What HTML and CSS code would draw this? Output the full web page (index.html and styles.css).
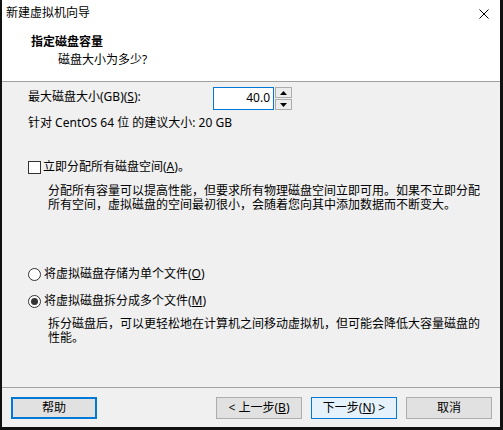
FILE: index.html
```html
<!DOCTYPE html>
<html lang="zh-CN">
<head>
<meta charset="utf-8">
<title>新建虚拟机向导</title>
<link rel="stylesheet" href="styles.css">
</head>
<body>
<div class="window">
  <div class="titlebar">
    <span class="title">新建虚拟机向导</span>
    <svg class="close" width="10" height="10" viewBox="0 0 10 10"><path d="M0.5 0.5 L9.5 9.5 M9.5 0.5 L0.5 9.5" stroke="#000" stroke-width="1" fill="none"/></svg>
  </div>
  <div class="header">
    <div class="h-title">指定磁盘容量</div>
    <div class="h-sub">磁盘大小为多少?</div>
  </div>
  <div class="content">
    <div class="size-row">
      <span class="size-label">最大磁盘大小(GB)(<u>S</u>):</span>
      <div class="spin-input">40.0</div>
      <div class="spin-btns">
        <div class="spin-btn"><svg width="7" height="4" viewBox="0 0 7 4"><polygon points="3.5,0 7,4 0,4" fill="#000"/></svg></div>
        <div class="spin-btn"><svg width="7" height="4" viewBox="0 0 7 4"><polygon points="0,0 7,0 3.5,4" fill="#000"/></svg></div>
      </div>
    </div>
    <div class="recommend">针对 CentOS 64 位 的建议大小: 20 GB</div>
    <div class="check-row">
      <span class="checkbox"></span>
      <span class="check-label">立即分配所有磁盘空间(<u>A</u>)。</span>
    </div>
    <div class="desc desc-alloc">
      <div class="desc-line">分配所有容量可以提高性能，但要求所有物理磁盘空间立即可用。如果不立即分配</div>
      <div class="desc-line">所有空间，虚拟磁盘的空间最初很小，会随着您向其中添加数据而不断变大。</div>
    </div>
    <div class="radio-row radio-first">
      <span class="radio"></span>
      <span class="radio-label">将虚拟磁盘存储为单个文件(<u>O</u>)</span>
    </div>
    <div class="radio-row radio-second">
      <span class="radio checked"></span>
      <span class="radio-label">将虚拟磁盘拆分成多个文件(<u>M</u>)</span>
    </div>
    <div class="desc desc-split">
      <div class="desc-line">拆分磁盘后，可以更轻松地在计算机之间移动虚拟机，但可能会降低大容量磁盘的</div>
      <div class="desc-line">性能。</div>
    </div>
  </div>
  <div class="footer">
    <button class="btn btn-help">帮助</button>
    <span class="spacer"></span>
    <button class="btn">&lt; 上一步(<u>B</u>)</button>
    <button class="btn btn-next">下一步(<u>N</u>) &gt;</button>
    <button class="btn">取消</button>
  </div>
</div>
</body>
</html>
```

FILE: styles.css
```css
html, body {
  margin: 0;
  padding: 0;
  background: #111111;
}
body {
  width: 503px;
  height: 430px;
  overflow: hidden;
  font-family: "Noto Sans", "Noto Sans CJK SC", sans-serif;
  font-size: 12px;
  color: #000;
}
.window {
  width: 498px;
  height: 427px;
  margin-left: 2px;
  background: #f0f0f0;
  display: flex;
  flex-direction: column;
}
.titlebar {
  height: 30px;
  background: #fff;
  display: flex;
  align-items: flex-start;
  justify-content: space-between;
  padding: 5px 0 0 4px;
  box-sizing: border-box;
}
.title {
  line-height: 16px;
}
.close {
  margin: 4px 11px 0 0;
}
.header {
  height: 52px;
  background: #fff;
  box-sizing: border-box;
  padding-top: 4px;
  border-bottom: 1px solid #a0a0a0;
}
.h-title {
  font-weight: bold;
  line-height: 16px;
  padding-left: 29px;
}
.h-sub {
  line-height: 16px;
  margin-top: 2px;
  padding-left: 56px;
}
.content {
  flex: 1;
  padding-left: 26px;
}
.size-row {
  display: flex;
  align-items: flex-start;
  margin-top: 5px;
  height: 23px;
}
.size-label {
  width: 185px;
  line-height: 16px;
  padding-top: 2px;
}
.spin-input {
  width: 61px;
  height: 23px;
  box-sizing: border-box;
  border: 1px solid #0078d7;
  background: #fff;
  text-align: right;
  padding-right: 3px;
  line-height: 20px;
}
.spin-btns {
  margin-left: 1px;
  width: 17px;
  height: 23px;
  display: flex;
  flex-direction: column;
  gap: 1px;
}
.spin-btn {
  flex: 1;
  border: 1px solid #adadad;
  background: #ececec;
  display: flex;
  align-items: center;
  justify-content: center;
}
.spin-btn svg {
  display: block;
}
.recommend {
  margin-top: 5px;
  line-height: 16px;
}
.check-row {
  margin-top: 28px;
  display: flex;
  align-items: center;
  line-height: 16px;
}
.checkbox {
  width: 13px;
  height: 13px;
  box-sizing: border-box;
  border: 1px solid #333;
  background: #fff;
}
.check-label {
  margin-left: 2px;
}
.desc {
  padding-left: 20px;
}
.desc-line {
  height: 14px;
  line-height: 14px;
  white-space: nowrap;
}
.desc-alloc {
  margin-top: 9px;
}
.radio-row {
  display: flex;
  align-items: center;
  line-height: 16px;
}
.radio-first {
  margin-top: 54px;
}
.radio-second {
  margin-top: 11px;
}
.radio {
  width: 13px;
  height: 13px;
  box-sizing: border-box;
  border: 1px solid #333;
  border-radius: 50%;
  background: #fff;
  display: flex;
  align-items: center;
  justify-content: center;
}
.radio.checked::after {
  content: "";
  width: 7px;
  height: 7px;
  border-radius: 50%;
  background: #333;
}
.radio-label {
  margin-left: 3px;
}
.desc-split {
  margin-top: 8px;
}
.footer {
  border-top: 1px solid #a0a0a0;
  display: flex;
  align-items: flex-start;
  padding: 9px 8px 8px 9px;
  gap: 9px;
}
.spacer {
  flex: 1;
}
.btn {
  width: 86px;
  height: 22px;
  box-sizing: border-box;
  border: 1px solid #adadad;
  background: #e1e1e1;
  font-family: "Noto Sans", "Noto Sans CJK SC", sans-serif;
  font-size: 12px;
  color: #000;
  padding: 0;
  line-height: 18px;
}
.btn-help {
  border: 2px solid #0078d7;
}
.btn-next {
  border-color: #0078d7;
  background: #e5f1fb;
}
```
